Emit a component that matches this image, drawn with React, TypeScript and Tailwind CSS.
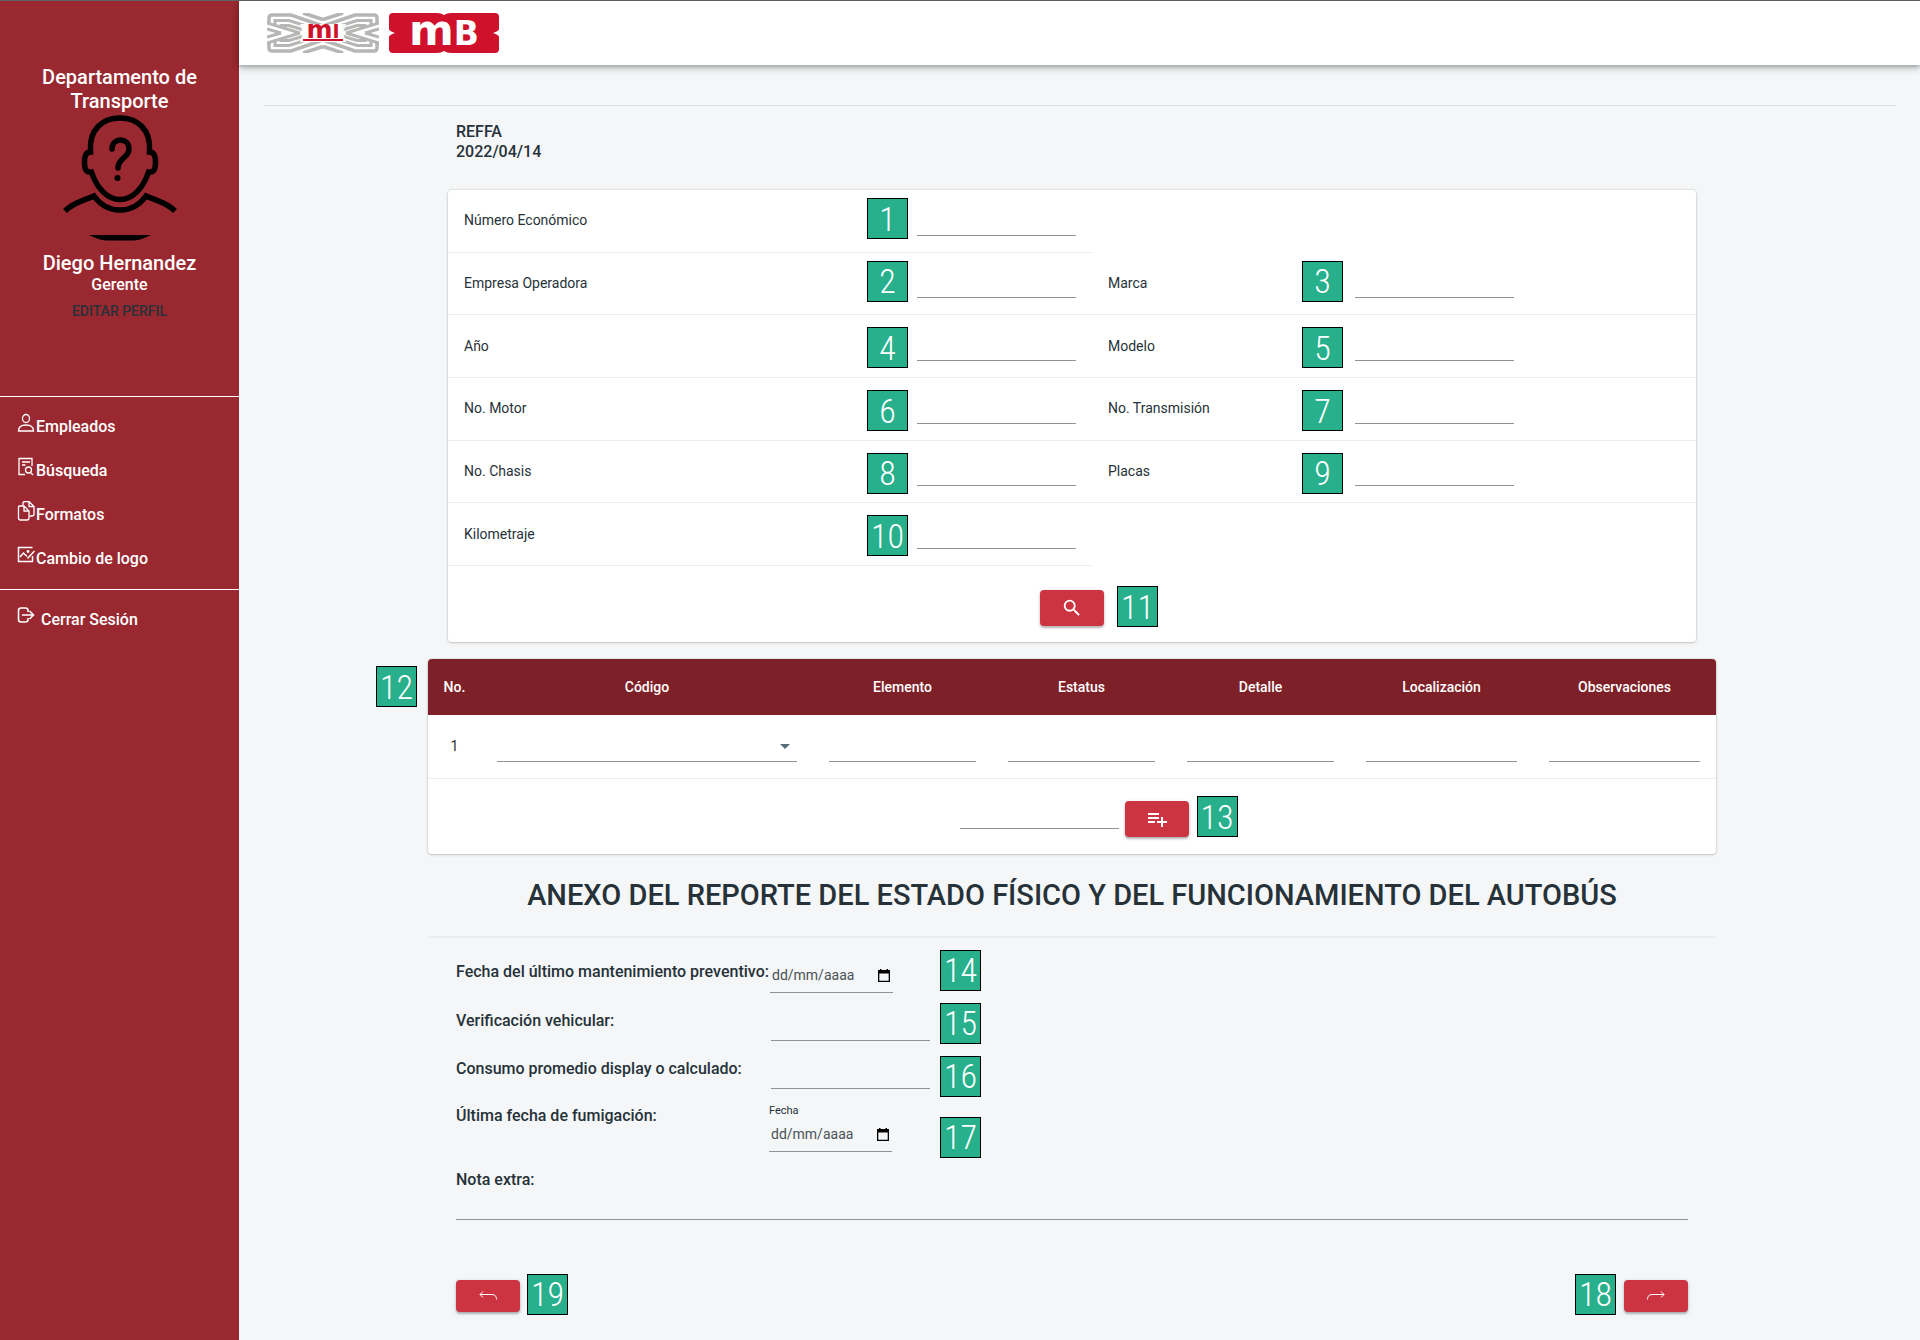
import type { ReactNode } from "react";
import { MdPlaylistAdd, MdSearch } from "react-icons/md";

const line = "border-b border-[#919293] bg-transparent outline-none";

function Badge({ n, className = "" }: { n: number; className?: string }) {
  return (
    <span
      className={`flex size-[41px] shrink-0 items-center justify-center border border-black bg-[#27b08b] font-['Roboto_Condensed','Roboto',sans-serif] text-[34px] leading-none font-light text-white ${className}`}
    >
      {n}
    </span>
  );
}

function ActionButton({ label, className = "", children }: { label: string; className?: string; children: ReactNode }) {
  return (
    <button
      type="button"
      aria-label={label}
      className={`flex w-16 shrink-0 items-center justify-center rounded-[4px] bg-[#cb3440] text-white shadow-[0_2px_2px_rgba(0,0,0,0.22),0_1px_4px_rgba(0,0,0,0.14)] ${className}`}
    >
      {children}
    </button>
  );
}

function Quadrant({ transform }: { transform?: string }) {
  return (
    <g transform={transform} fill="none" stroke="#b6b6b4">
      <path d="M2 11V5q0-3 3-3h19l32 11" strokeWidth="3.500" />
      <path d="M8 13V7.500h14l30 9.500" strokeWidth="3" />
      <path d="M14 15v-2.500h8l20 6" strokeWidth="3" />
      <path d="M0 10l33 10" strokeWidth="3" />
      <path d="M0 16l14 4" strokeWidth="3" />
      <path d="M36 0l20 6.500" strokeWidth="3.500" />
    </g>
  );
}

function MetroLogo() {
  return (
    <svg viewBox="0 0 112 40" className="h-10 w-28" role="img" aria-label="MI">
      <Quadrant />
      <Quadrant transform="matrix(-1 0 0 1 112 0)" />
      <Quadrant transform="matrix(1 0 0 -1 0 40)" />
      <Quadrant transform="matrix(-1 0 0 -1 112 40)" />
      <path d="M33 11h46l-3 9 3 9H33l3-9z" fill="#fff" />
      <text x="56" y="25" textAnchor="middle" fill="#d0112b" fontFamily="DejaVu Sans" fontWeight="700" fontSize="25">
        m<tspan fontSize="19">I</tspan>
      </text>
      <path d="M36 26h40v2H36z" fill="#d0112b" />
    </svg>
  );
}

function MetrobusLogo() {
  return (
    <svg viewBox="0 -8 110 56" className="h-14 w-[110px]" role="img" aria-label="MB">
      <path
        d="M4 0H48q4 0 7 2q3-2 7-2H106q4 0 4 4V16q0 2-6 4q6 2 6 4V36q0 4-4 4H62q-4 0-7-2q-3 2-7 2H4q-4 0-4-4V24q0-2 6-4q-6-2-6-4V4q0-4 4-4z"
        fill="#d0112b"
      />
      <text x="55" y="32" textAnchor="middle" fill="#fff" fontFamily="DejaVu Sans" fontWeight="700" fontSize="43">
        m<tspan fontSize="33">B</tspan>
      </text>
    </svg>
  );
}

function Avatar() {
  return (
    <svg viewBox="0 0 126 126" className="size-[126px]" fill="none" stroke="#000" strokeWidth="5.500" aria-hidden="true">
      <path d="M33.500 36C32 14 46 3 63 3S94 14 92.500 36l0 1q6 0 6 10t-5 10l-2 0C86 74 75 84.500 63 84.500S40 74 34.500 57l-2 0q-5 0-5-10t6-10z" />
      <path d="M8 96C17 87 26 86 37 81q10 14 26 14t26-14c11 5 20 6 29 15" />
      <path d="M55 34c0-12 17-12 17 0c0 9-11 9-11 19" strokeLinecap="round" />
      <circle cx="60.500" cy="63" r="3" fill="#000" stroke="none" />
      <path d="M32 120H94Q84 125 77 125.500H49Q42 125 32 120z" fill="#000" stroke="none" />
    </svg>
  );
}

function NavIcon({ children }: { children: ReactNode }) {
  return (
    <svg viewBox="0 0 18 20" className="h-5 w-[18px] shrink-0" fill="none" stroke="#fff" strokeWidth="1.300" aria-hidden="true">
      {children}
    </svg>
  );
}

const nav = [
  {
    label: "Empleados",
    icon: (
      <>
        <ellipse cx="9" cy="5.500" rx="3.500" ry="4" />
        <path d="M1.500 18q0-6 7.500-6t7.500 6z" />
      </>
    ),
  },
  {
    label: "Búsqueda",
    icon: (
      <>
        <path d="M8 17.500H2V1.500h13V9M5 5h8M5 8h3.500" />
        <circle cx="11.500" cy="13" r="3" />
        <path d="M13.500 15.500l2.500 2.500" />
      </>
    ),
  },
  {
    label: "Formatos",
    icon: (
      <>
        <path d="M2.500 5H7l5 5v7q0 2-2 2H3.500q-2 0-2-2V6q0-1 1-1zM7 5v5h5" />
        <path d="M6 4.500V2.500q0-2 2-2h4l5 5V13q0 2-2 2h-2.500M12 .500v5h5" />
      </>
    ),
  },
  {
    label: "Cambio de logo",
    icon: (
      <>
        <path d="M15.500 11V16.500H1.500V2.500h14" strokeWidth="1.500" />
        <path d="M3 12l3.500-4 3.500 3.500M10.500 13.500L17.500 6" strokeWidth="1.500" />
        <circle cx="11" cy="6.500" r=".8" fill="#fff" />
      </>
    ),
  },
];

type Field = { label: string; n: number };
const rows: { left: Field; right?: Field; badgeTop: string }[] = [
  { left: { label: "Número Económico", n: 1 }, badgeTop: "top-2" },
  { left: { label: "Empresa Operadora", n: 2 }, right: { label: "Marca", n: 3 }, badgeTop: "top-2" },
  { left: { label: "Año", n: 4 }, right: { label: "Modelo", n: 5 }, badgeTop: "top-3" },
  { left: { label: "No. Motor", n: 6 }, right: { label: "No. Transmisión", n: 7 }, badgeTop: "top-3" },
  { left: { label: "No. Chasis", n: 8 }, right: { label: "Placas", n: 9 }, badgeTop: "top-3" },
  { left: { label: "Kilometraje", n: 10 }, badgeTop: "top-3" },
];

function FieldCell({ field, badgeTop, right = false }: { field: Field; badgeTop: string; right?: boolean }) {
  const id = `field-${field.n}`;
  return (
    <div className="flex items-center border-b border-[#eceded] px-4">
      <label htmlFor={id} className={right ? "w-[247px]" : "grow"}>
        {field.label}
      </label>
      <div className="relative flex items-end self-stretch pb-4">
        <Badge n={field.n} className={`absolute ${right ? "-left-[53px]" : "-left-[50px]"} ${badgeTop}`} />
        <input id={id} type="text" className={`h-7 w-[159px] ${line}`} />
      </div>
    </div>
  );
}

const columns = [
  { name: "Elemento", width: "w-[179px]" },
  { name: "Estatus", width: "w-[179px]" },
  { name: "Detalle", width: "w-[179px]" },
  { name: "Localización", width: "" },
  { name: "Observaciones", width: "" },
];

function DateField({ id, caption }: { id: string; caption?: string }) {
  return (
    <div className={`flex w-[123px] flex-col ${line}`}>
      {caption && (
        <label htmlFor={id} className="text-[11px] leading-4">
          {caption}
        </label>
      )}
      <div className="flex h-8 items-center justify-between">
        <input
          id={id}
          type="text"
          placeholder="dd/mm/aaaa"
          className="w-24 bg-transparent pl-0.5 text-[14px] outline-none placeholder:text-[#4a5256]"
        />
        <button type="button" aria-label="Abrir calendario" className="pr-[3px]">
          <svg viewBox="0 0 12 13" className="h-[13px] w-3" fill="#000" aria-hidden="true">
            <path fillRule="evenodd" d="M2 0h1.500v1h5V0H10v1h2v12H0V1h2zM1.300 4.500v7.200h9.400V4.500z" />
          </svg>
        </button>
      </div>
    </div>
  );
}

export default function App() {
  return (
    <div className="flex min-h-screen border-t border-[#5f6166] bg-[#f4f6f8] font-[Roboto,sans-serif] text-[#263238]">
      <aside className="w-[239px] shrink-0 bg-[#992830] text-white">
        <div className="flex h-[396px] flex-col items-center border-b border-white pt-16 text-center">
          <h2 className="w-44 text-[20px] leading-6 font-medium">Departamento de Transporte</h2>
          <div className="mt-0.5">
            <Avatar />
          </div>
          <p className="mt-2.5 text-[20px] leading-6 font-medium">Diego Hernandez</p>
          <p className="text-[16px] leading-5 font-medium">Gerente</p>
          <button type="button" className="mt-1 text-[14px] leading-6 font-medium text-[#263238]">
            EDITAR PERFIL
          </button>
        </div>
        <nav className="text-[16px] font-medium">
          <ul className="border-b border-white pt-2 pb-2">
            {nav.map((item) => (
              <li key={item.label}>
                <a href="#" className="flex h-11 items-start pt-2 pl-[17px]">
                  <NavIcon>{item.icon}</NavIcon>
                  <span className="pl-px leading-7">{item.label}</span>
                </a>
              </li>
            ))}
          </ul>
          <a href="#" className="mt-3 flex items-start pl-[17px]">
            <span className="pt-1">
              <NavIcon>
                <path
                  d="M11 6V4.500q0-2.500-2.500-2.500H4Q1.500 2 1.500 4.500v9Q1.500 16 4 16h4.500q2.500 0 2.500-2.500V12M5 9h11M12.500 5l4 4-4 4"
                  strokeWidth="1.600"
                />
              </NavIcon>
            </span>
            <span className="pl-1.5 leading-9">Cerrar Sesión</span>
          </a>
        </nav>
      </aside>

      <main className="min-w-0 grow">
        <header className="flex h-16 items-center gap-2.5 bg-white pl-7 shadow-[0_2px_4px_rgba(0,0,0,0.25),0_4px_8px_rgba(0,0,0,0.14)]">
          <MetroLogo />
          <MetrobusLogo />
        </header>

        <div className="pt-10 pr-6 pl-[25px]">
          <hr className="border-[#dcdee0]" />
          <div className="pr-[180px] pl-[164px]">
            <div className="mx-7 mt-4 text-[16px] leading-5 font-medium">
              <p>REFFA</p>
              <p>2022/04/14</p>
            </div>

            <form className="mx-5 mt-7 rounded-[4px] bg-white text-[14px] shadow-[0_0_0_1px_rgba(0,0,0,0.06),0_1px_3px_rgba(0,0,0,0.16)]">
              <div className="grid h-94 auto-rows-fr">
                {rows.map((row) => (
                  <div key={row.left.n} className="grid grid-cols-[644fr_604fr]">
                    <FieldCell field={row.left} badgeTop={row.badgeTop} />
                    {row.right && <FieldCell field={row.right} badgeTop={row.badgeTop} right />}
                  </div>
                ))}
              </div>
              <div className="flex justify-center pt-6 pb-4">
                <div className="relative">
                  <ActionButton label="Buscar" className="h-9">
                    <MdSearch className="size-[22px]" />
                  </ActionButton>
                  <Badge n={11} className="absolute -top-1 left-[77px]" />
                </div>
              </div>
            </form>

            <section className="relative mt-[17px] rounded-[4px] bg-white text-[14px] shadow-[0_0_0_1px_rgba(0,0,0,0.06),0_1px_3px_rgba(0,0,0,0.16)]">
              <Badge n={12} className="absolute top-[7px] -left-[52px]" />
              <table className="w-full table-fixed">
                <thead>
                  <tr className="h-14 text-white">
                    <th className="w-[53px] rounded-tl-[4px] bg-[#7e2028] font-medium">No.</th>
                    <th className="w-[332px] bg-[#7e2028] font-medium">Código</th>
                    {columns.map((c) => (
                      <th key={c.name} className={`bg-[#7e2028] font-medium last:rounded-tr-[4px] ${c.width}`}>
                        {c.name}
                      </th>
                    ))}
                  </tr>
                </thead>
                <tbody>
                  <tr className="h-[63px] border-b border-[#eceded] align-bottom">
                    <td className="text-center align-middle">1</td>
                    <td className="px-4 pb-4">
                      <div className="relative">
                        <select aria-label="Código" className={`block h-8 w-full appearance-none ${line}`} />
                        <svg viewBox="0 0 10 5" className="absolute top-3.5 right-[7px] h-[5px] w-2.5" fill="#546e7a" aria-hidden="true">
                          <path d="M0 0h10L5 5z" />
                        </svg>
                      </div>
                    </td>
                    {columns.map((c) => (
                      <td key={c.name} className="px-4 pb-4">
                        <input type="text" aria-label={c.name} className={`block h-7 w-full ${line}`} />
                      </td>
                    ))}
                  </tr>
                </tbody>
              </table>
              <div className="flex h-[75px] items-center justify-center gap-1.5 pt-1.5 pl-1">
                <input type="text" aria-label="Nuevo elemento" className={`h-5 w-[159px] ${line}`} />
                <div className="relative">
                  <ActionButton label="Agregar fila" className="h-9">
                    <MdPlaylistAdd className="size-6" />
                  </ActionButton>
                  <Badge n={13} className="absolute -top-[5px] left-18" />
                </div>
              </div>
            </section>

            <h1 className="mt-[21px] text-center text-[29px] leading-10 font-medium">
              ANEXO DEL REPORTE DEL ESTADO FÍSICO Y DEL FUNCIONAMIENTO DEL AUTOBÚS
            </h1>
            <hr className="mt-[21px] border-t-2 border-[#eaecee]" />

            <form className="mx-7 mt-2.5">
              <div className="flex text-[16px] font-medium">
                <div className="w-[484px]">
                  <div className="flex h-12">
                    <label htmlFor="maintenance" className="w-[314px] leading-12">
                      Fecha del último mantenimiento preventivo:
                    </label>
                    <div className="self-end pb-[3px] font-normal">
                      <DateField id="maintenance" />
                    </div>
                  </div>
                  <div className="flex h-12 items-end pb-[3px]">
                    <label htmlFor="verification" className="w-[315px] leading-10">
                      Verificación vehicular:
                    </label>
                    <input id="verification" type="text" className={`h-7 w-[159px] ${line}`} />
                  </div>
                  <div className="flex h-12 items-end pb-[3px]">
                    <label htmlFor="consumption" className="w-[315px] leading-10">
                      Consumo promedio display o calculado:
                    </label>
                    <input id="consumption" type="text" className={`h-7 w-[159px] ${line}`} />
                  </div>
                  <div className="flex h-16">
                    <p className="w-[313px] leading-12">Última fecha de fumigación:</p>
                    <div className="self-end pb-1 font-normal">
                      <DateField id="fumigation" caption="Fecha" />
                    </div>
                  </div>
                </div>
                <div className="flex flex-col gap-3 pt-0.5">
                  <Badge n={14} />
                  <Badge n={15} />
                  <Badge n={16} />
                  <Badge n={17} className="mt-2" />
                </div>
              </div>
              <label htmlFor="note" className="block text-[16px] leading-11 font-medium">
                Nota extra:
              </label>
              <input id="note" type="text" className={`block h-[18px] w-full ${line}`} />
              <div className="mt-[54px] flex items-center justify-between">
                <div className="flex items-center gap-[7px]">
                  <ActionButton label="Regresar" className="mt-1 h-8">
                    <svg viewBox="0 0 18 10" className="h-2.5 w-[18px]" fill="none" stroke="#fff" aria-hidden="true">
                      <path d="M4 .500L1 3.500l3 3M1 3.500h12q4.500 0 4.500 5" />
                    </svg>
                  </ActionButton>
                  <Badge n={19} />
                </div>
                <div className="flex items-center gap-2">
                  <Badge n={18} />
                  <ActionButton label="Continuar" className="mt-1 h-8">
                    <svg viewBox="0 0 18 10" className="h-2.5 w-[18px]" fill="none" stroke="#fff" aria-hidden="true">
                      <path d="M14 .500l3 3-3 3M17 3.500H5Q.500 3.500 .500 8.500" />
                    </svg>
                  </ActionButton>
                </div>
              </div>
            </form>
          </div>
        </div>
      </main>
    </div>
  );
}
